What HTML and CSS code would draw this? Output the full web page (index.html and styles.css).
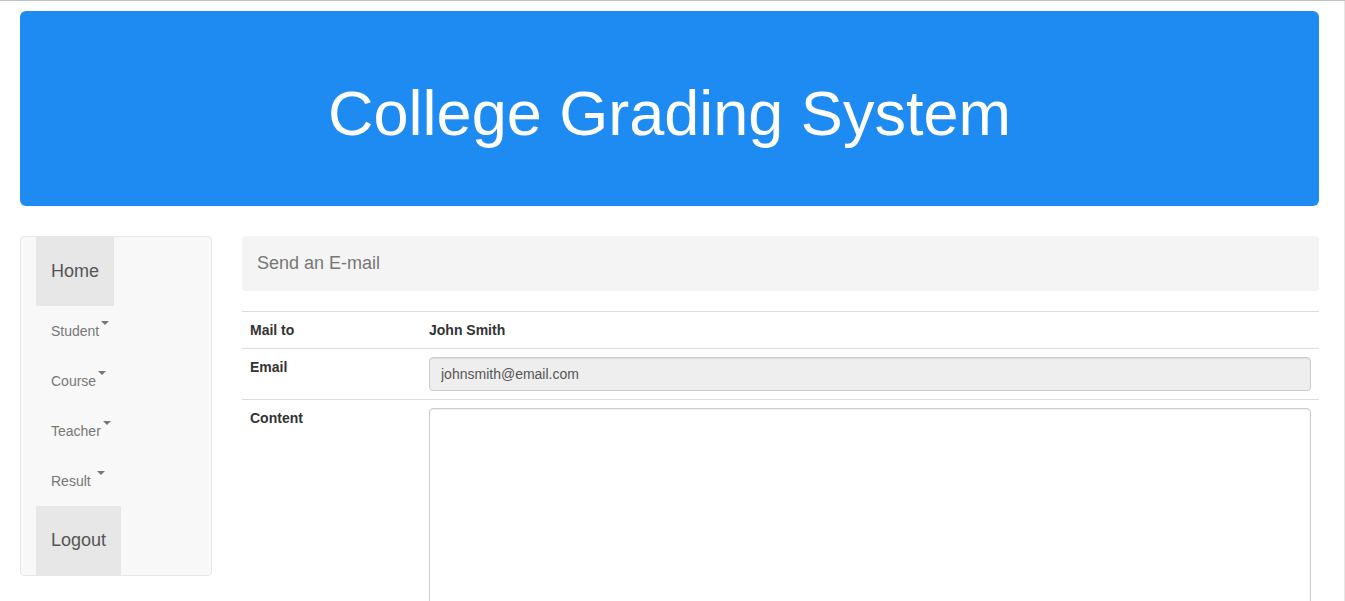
FILE: index.html
```html
<!DOCTYPE html>
<html lang="en">
<head>
<meta charset="utf-8">
<title>College Grading System</title>
<link rel="stylesheet" href="styles.css">
</head>
<body>
<div class="frame">
  <header class="jumbotron">
    <h1>College Grading System</h1>
  </header>
  <div class="layout">
    <nav class="sidebar">
      <ul class="nav">
        <li><a class="nav-main" href="#">Home</a></li>
        <li><a class="nav-drop" href="#">Student<span class="caret"></span></a></li>
        <li><a class="nav-drop" href="#">Course<span class="caret"></span></a></li>
        <li><a class="nav-drop" href="#">Teacher<span class="caret"></span></a></li>
        <li><a class="nav-drop" href="#">Result <span class="caret"></span></a></li>
        <li><a class="nav-main" href="#">Logout</a></li>
      </ul>
    </nav>
    <main class="content">
      <div class="panel-head">Send an E-mail</div>
      <table class="mail-table">
        <tr>
          <th class="label-cell">Mail to</th>
          <th class="value-cell">John Smith</th>
        </tr>
        <tr>
          <th class="label-cell">Email</th>
          <td class="value-cell"><input class="form-control" type="text" value="johnsmith@email.com" readonly></td>
        </tr>
        <tr>
          <th class="label-cell">Content</th>
          <td class="value-cell"><textarea class="form-control textarea"></textarea></td>
        </tr>
      </table>
    </main>
  </div>
</div>
</body>
</html>
```
FILE: styles.css
```css
* { box-sizing: border-box; }
html, body { margin: 0; padding: 0; }
body {
  border-top: 1px solid #c2c2c2;
  font-family: "Liberation Sans", Arial, Helvetica, sans-serif;
  font-size: 14px;
  line-height: 20px;
  color: #333;
  background: #fff;
}
.frame {
  border-right: 1px solid #e6e6e6;
  padding: 10px 25px 0 20px;
  min-height: 600px;
}
.jumbotron {
  background: #1e8bf3;
  border-radius: 6px;
  padding: 48px 60px;
  margin-bottom: 30px;
  text-align: center;
}
.jumbotron h1 {
  margin: 20px 0 10px;
  font-size: 63px;
  line-height: 1.1;
  font-weight: 400;
  color: #fff;
}
.layout {
  display: flex;
  align-items: flex-start;
  gap: 30px;
}
.sidebar {
  width: 192px;
  flex: none;
  background: #f8f8f8;
  border: 1px solid #e7e7e7;
  border-radius: 4px;
  padding: 0 15px;
}
.nav {
  list-style: none;
  margin: 0;
  padding: 0;
  display: flex;
  flex-direction: column;
  align-items: flex-start;
}
.nav a {
  display: block;
  text-decoration: none;
}
.nav-main {
  background: #e7e7e7;
  color: #555;
  font-size: 18px;
  line-height: 21px;
  padding: 24px 15px;
}
.nav-drop {
  color: #777;
  font-size: 14px;
  line-height: 20px;
  padding: 15px;
}
.caret {
  display: inline-block;
  width: 0;
  height: 0;
  margin-left: 2px;
  vertical-align: top;
  border-top: 4px solid #777;
  border-left: 4px solid transparent;
  border-right: 4px solid transparent;
}
.content {
  flex: 1;
  min-width: 0;
}
.panel-head {
  background: #f4f4f4;
  border-radius: 4px;
  padding: 15px;
  font-size: 18px;
  line-height: 25px;
  color: #777;
}
.mail-table {
  width: 100%;
  margin-top: 20px;
  border-collapse: collapse;
  border-spacing: 0;
}
.mail-table th,
.mail-table td {
  border-top: 1px solid #ddd;
  padding: 8px;
  text-align: left;
  vertical-align: top;
  line-height: 20px;
}
.mail-table th { font-weight: 700; }
.label-cell { width: 179px; }
.form-control {
  display: block;
  width: 100%;
  height: 34px;
  padding: 6px 11px;
  font-family: inherit;
  font-size: 14px;
  line-height: 20px;
  color: #555;
  background: #fff;
  border: 1px solid #ccc;
  border-radius: 4px;
  box-shadow: inset 0 1px 1px rgba(0,0,0,.075);
}
input.form-control[readonly] { background: #eee; }
.textarea {
  height: 230px;
  resize: vertical;
}
```
